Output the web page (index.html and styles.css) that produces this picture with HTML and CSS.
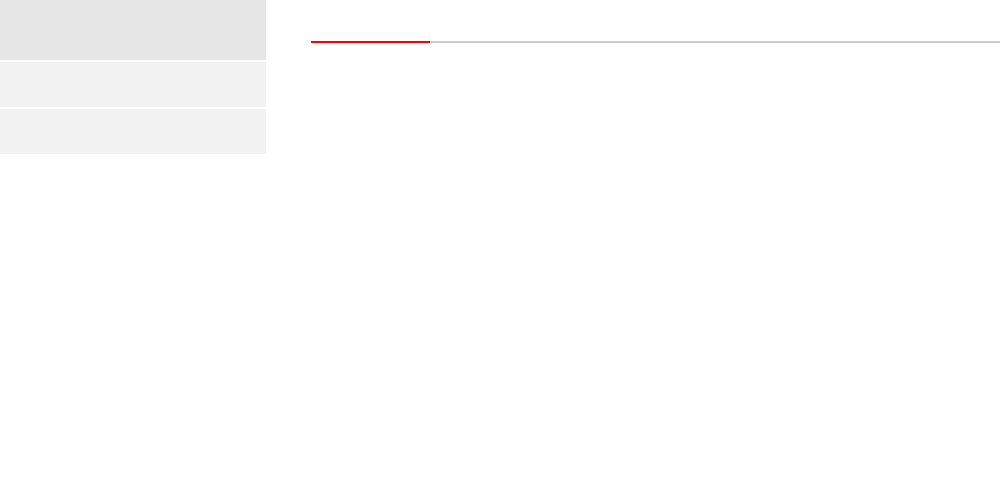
FILE: index.html
```html
<!DOCTYPE html>
<html>
<head>
<meta charset="utf-8">
<link rel="stylesheet" href="styles.css">
</head>
<body>
<div class="layout">
  <aside class="sidebar">
    <div class="side-item side-item--head"></div>
    <div class="side-item"></div>
    <div class="side-item"></div>
  </aside>
  <main class="main">
    <div class="tabs">
      <div class="tab tab--active"></div>
    </div>
  </main>
</div>
</body>
</html>
```
FILE: styles.css
```css
html, body {
  margin: 0;
  padding: 0;
  background: #ffffff;
  font-family: "Liberation Sans", Arial, sans-serif;
}
.layout {
  display: flex;
  width: 1000px;
  height: 500px;
}
.sidebar {
  width: 266px;
  flex: 0 0 266px;
  display: flex;
  flex-direction: column;
  gap: 2px;
}
.side-item {
  height: 45px;
  background: #f2f2f2;
}
.side-item--head {
  height: 60px;
  background: #e6e6e6;
}
.main {
  flex: 1;
  padding-left: 45px;
}
.tabs {
  height: 41px;
  border-bottom: 2px solid #cccccc;
  display: flex;
  align-items: flex-end;
}
.tab {
  width: 119px;
  height: 41px;
}
.tab--active {
  box-shadow: inset 0 0 0 0 transparent;
  position: relative;
}
.tab--active::after {
  content: "";
  position: absolute;
  left: 0;
  right: 0;
  bottom: -2px;
  height: 2px;
  background: #ff0000;
}
```
